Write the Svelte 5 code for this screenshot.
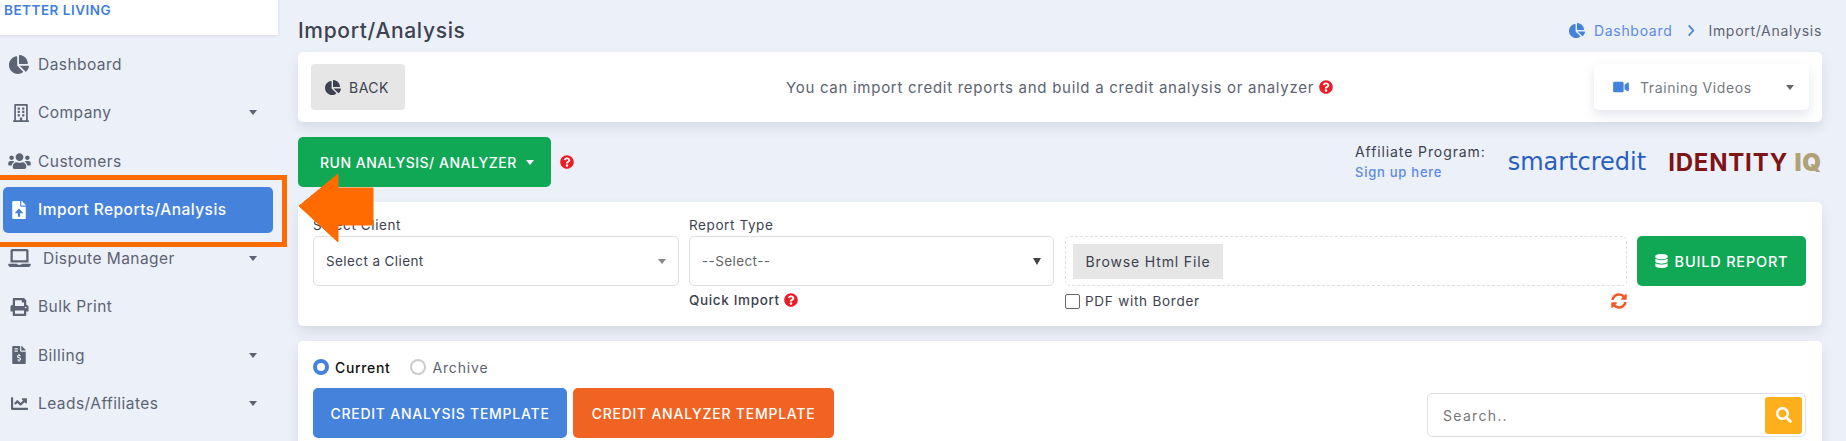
<script>
	const icons = {
		pie: ['0 0 544 512', 'M527.79 288H290.5l158.03 158.03c6.04 6.04 15.98 6.53 22.19 .68 38.7-36.46 65.32-85.61 73.13-140.86 1.34-9.46-6.51-17.85-16.06-17.85zm-15.83-64.8C503.72 103.74 408.26 8.28 288.8 .04 279.68-.59 272 7.1 272 16.24V240h223.77c9.14 0 16.82-7.68 16.19-16.8zM224 288V50.71c0-9.55-8.39-17.4-17.84-16.06C86.99 51.49-4.1 155.6 .14 280.37 4.5 408.51 114.83 513.59 243.03 511.98c50.4-.63 96.97-16.87 135.26-44.03 7.9-5.6 8.42-17.23 1.57-24.08L224 288z'],
		building: ['0 0 448 512', 'M128 148v-40c0-6.6 5.4-12 12-12h40c6.6 0 12 5.4 12 12v40c0 6.6-5.4 12-12 12h-40c-6.6 0-12-5.4-12-12zm140 12h40c6.6 0 12-5.4 12-12v-40c0-6.6-5.4-12-12-12h-40c-6.6 0-12 5.4-12 12v40c0 6.6 5.4 12 12 12zm-128 96h40c6.6 0 12-5.4 12-12v-40c0-6.6-5.4-12-12-12h-40c-6.6 0-12 5.4-12 12v40c0 6.6 5.4 12 12 12zm128 0h40c6.6 0 12-5.4 12-12v-40c0-6.6-5.4-12-12-12h-40c-6.6 0-12 5.4-12 12v40c0 6.6 5.4 12 12 12zm-76 84v-40c0-6.6-5.4-12-12-12h-40c-6.6 0-12 5.4-12 12v40c0 6.6 5.4 12 12 12h40c6.6 0 12-5.4 12-12zm76 12h40c6.6 0 12-5.4 12-12v-40c0-6.6-5.4-12-12-12h-40c-6.6 0-12 5.4-12 12v40c0 6.6 5.4 12 12 12zm180 124v36H0v-36c0-6.6 5.4-12 12-12h19.5V24c0-13.3 10.7-24 24-24h337c13.3 0 24 10.7 24 24v440H436c6.6 0 12 5.4 12 12zM79.5 463H192v-67c0-6.6 5.4-12 12-12h40c6.6 0 12 5.4 12 12v67h112.5V49L80 48l-.5 415z'],
		users: ['0 0 640 512', 'M96 224c35.3 0 64-28.7 64-64s-28.7-64-64-64-64 28.7-64 64 28.7 64 64 64zm448 0c35.3 0 64-28.7 64-64s-28.7-64-64-64-64 28.7-64 64 28.7 64 64 64zm32 32h-64c-17.6 0-33.5 7.1-45.1 18.6 40.3 22.1 68.9 62 75.1 109.4h66c17.7 0 32-14.3 32-32v-32c0-35.3-28.7-64-64-64zm-256 0c61.9 0 112-50.1 112-112S381.9 32 320 32 208 82.1 208 144s50.1 112 112 112zm76.8 32h-8.3c-20.8 10-43.9 16-68.5 16s-47.6-6-68.5-16h-8.3C179.6 288 128 339.6 128 403.2V432c0 26.5 21.5 48 48 48h288c26.5 0 48-21.5 48-48v-28.8c0-63.6-51.6-115.2-115.2-115.2zm-223.7-13.4C161.5 263.1 145.6 256 128 256H64c-35.3 0-64 28.7-64 64v32c0 17.7 14.3 32 32 32h65.9c6.3-47.4 34.9-87.3 75.2-109.4z'],
		upload: ['0 0 384 512', 'M224 136V0H24C10.7 0 0 10.7 0 24v464c0 13.3 10.7 24 24 24h336c13.3 0 24-10.7 24-24V160H248c-13.2 0-24-10.8-24-24zm65.18 215.97H224v80c0 8.84-7.16 16-16 16h-32c-8.84 0-16-7.16-16-16v-80H94.82c-14.28 0-21.41-17.29-11.27-27.36l96.42-95.7c6.65-6.61 17.39-6.61 24.04 0l96.42 95.7c10.15 10.07 3.03 27.36-11.25 27.36zM377 105L279.1 7c-4.5-4.5-10.6-7-17-7H256v128h128v-6.1c0-6.3-2.5-12.4-7-16.9z'],
		laptop: ['0 0 640 512', 'M624 416H381.54c-.74 19.81-14.71 32-32.74 32H288c-18.69 0-33.02-17.47-32.77-32H16c-8.8 0-16 7.2-16 16v16c0 35.2 28.8 64 64 64h512c35.2 0 64-28.8 64-64v-16c0-8.8-7.2-16-16-16zM576 48c0-26.4-21.6-48-48-48H112C85.6 0 64 21.6 64 48v336h512V48zm-64 272H128V64h384v256z'],
		print: ['0 0 512 512', 'M448 192V77.25c0-8.49-3.37-16.62-9.37-22.63L393.37 9.37c-6-6-14.14-9.37-22.63-9.37H96C78.33 0 64 14.33 64 32v160c-35.35 0-64 28.65-64 64v112c0 8.84 7.16 16 16 16h48v96c0 17.67 14.33 32 32 32h320c17.67 0 32-14.33 32-32v-96h48c8.84 0 16-7.16 16-16V256c0-35.35-28.65-64-64-64zm-64 256H128v-96h256v96zm0-224H128V64h192v48c0 8.84 7.16 16 16 16h48v96zm48 72c-13.25 0-24-10.75-24-24 0-13.26 10.75-24 24-24s24 10.74 24 24c0 13.25-10.75 24-24 24z'],
		invoice: ['0 0 384 512', 'M377 105L279.1 7c-4.5-4.5-10.6-7-17-7H256v128h128v-6.1c0-6.3-2.5-12.4-7-16.9zm-153 31V0H24C10.7 0 0 10.7 0 24v464c0 13.3 10.7 24 24 24h336c13.3 0 24-10.7 24-24V160H248c-13.2 0-24-10.8-24-24zM64 72c0-4.42 3.58-8 8-8h80c4.42 0 8 3.58 8 8v16c0 4.42-3.58 8-8 8H72c-4.42 0-8-3.58-8-8V72zm0 80v-16c0-4.42 3.58-8 8-8h80c4.42 0 8 3.58 8 8v16c0 4.42-3.58 8-8 8H72c-4.42 0-8-3.58-8-8zm144 263.88V440c0 4.42-3.58 8-8 8h-16c-4.42 0-8-3.58-8-8v-24.29c-11.29-.58-22.27-4.52-31.37-11.35-3.9-2.93-4.1-8.77-.57-12.14l11.75-11.21c2.77-2.64 6.89-2.76 10.13-.73 3.87 2.42 8.26 3.72 12.82 3.72h28.11c6.5 0 11.8-5.92 11.8-13.19 0-5.95-3.61-11.19-8.77-12.73l-45-13.5c-18.59-5.58-31.58-23.42-31.58-43.39 0-24.52 19.05-44.44 42.67-45.07V232c0-4.42 3.58-8 8-8h16c4.42 0 8 3.58 8 8v24.29c11.29.58 22.27 4.51 31.37 11.35 3.9 2.93 4.1 8.77.57 12.14l-11.75 11.21c-2.77 2.64-6.89 2.76-10.13.73-3.87-2.43-8.26-3.72-12.82-3.72h-28.11c-6.5 0-11.8 5.92-11.8 13.19 0 5.95 3.61 11.19 8.77 12.73l45 13.5c18.59 5.58 31.58 23.42 31.58 43.39 0 24.53-19.05 44.44-42.67 45.07z'],
		chart: ['0 0 512 512', 'M496 384H64V80c0-8.84-7.16-16-16-16H16C7.16 64 0 71.16 0 80v336c0 17.67 14.33 32 32 32h464c8.84 0 16-7.16 16-16v-32c0-8.84-7.16-16-16-16zM464 96H345.94c-21.38 0-32.09 25.85-16.97 40.97l32.4 32.4L288 242.75l-73.37-73.37c-12.5-12.5-32.76-12.5-45.25 0l-68.69 68.69c-6.25 6.25-6.25 16.38 0 22.63l22.62 22.62c6.25 6.25 16.38 6.25 22.63 0L192 237.25l73.37 73.37c12.5 12.5 32.76 12.5 45.25 0l96-96 32.4 32.4c15.12 15.12 40.97 4.41 40.97-16.97V112c0-8.84-7.16-16-16-16z'],
		help: ['0 0 512 512', 'M504 256c0 136.997-111.043 248-248 248S8 392.997 8 256C8 119.083 119.043 8 256 8s248 111.083 248 248zM262.655 90c-54.497 0-89.255 22.957-116.549 63.758-3.536 5.286-2.353 12.415 2.715 16.258l34.699 26.31c5.205 3.947 12.621 3.008 16.665-2.122 17.864-22.658 30.113-35.797 57.303-35.797 20.429 0 45.698 13.148 45.698 32.958 0 14.976-12.363 22.667-32.534 33.976C247.128 238.528 216 254.941 216 296v4c0 6.627 5.373 12 12 12h56c6.627 0 12-5.373 12-12v-1.333c0-28.462 83.186-29.647 83.186-106.667 0-58.002-60.165-102-116.531-102zM256 338c-25.365 0-46 20.635-46 46 0 25.364 20.635 46 46 46s46-20.636 46-46c0-25.365-20.635-46-46-46z'],
		video: ['0 0 576 512', 'M336.2 64H47.8C21.4 64 0 85.4 0 111.8v288.4C0 426.6 21.4 448 47.8 448h288.4c26.4 0 47.8-21.4 47.8-47.8V111.8c0-26.4-21.4-47.8-47.8-47.8zm189.4 37.7L416 177.3v157.4l109.6 75.5c21.2 14.6 50.4-.3 50.4-25.8V127.5c0-25.4-29.1-40.4-50.4-25.8z'],
		database: ['0 0 448 512', 'M448 73.143v45.714C448 159.143 347.667 192 224 192S0 159.143 0 118.857V73.143C0 32.857 100.333 0 224 0s224 32.857 224 73.143zM448 176v102.857C448 319.143 347.667 352 224 352S0 319.143 0 278.857V176c48.125 33.143 136.208 48.572 224 48.572S399.874 209.143 448 176zm0 160v102.857C448 479.143 347.667 512 224 512S0 479.143 0 438.857V336c48.125 33.143 136.208 48.572 224 48.572S399.874 369.143 448 336z'],
		search: ['0 0 512 512', 'M505 442.7L405.3 343c-4.5-4.5-10.6-7-17-7H372c27.6-35.3 44-79.7 44-128C416 93.1 322.9 0 208 0S0 93.1 0 208s93.1 208 208 208c48.3 0 92.7-16.4 128-44v16.3c0 6.4 2.5 12.5 7 17l99.7 99.7c9.4 9.4 24.6 9.4 33.9 0l28.3-28.3c9.4-9.4 9.4-24.6.1-34zM208 336c-70.7 0-128-57.2-128-128 0-70.7 57.2-128 128-128 70.7 0 128 57.2 128 128 0 70.7-57.2 128-128 128z'],
		sync: ['0 0 512 512', 'M370.72 133.28C339.458 104.008 298.888 87.962 255.848 88c-77.458.068-144.328 53.178-162.791 126.85-1.344 5.363-6.122 9.15-11.651 9.15H24.103c-7.498 0-13.194-6.807-11.807-14.176C33.933 94.924 134.813 8 256 8c66.448 0 126.791 26.136 171.315 68.685L463.03 40.97C478.149 25.851 504 36.559 504 57.941V192c0 13.255-10.745 24-24 24H345.941c-21.382 0-32.09-25.851-16.971-40.971l41.75-41.749zM32 296h134.059c21.382 0 32.09 25.851 16.971 40.971l-41.75 41.75c31.262 29.273 71.835 45.319 114.876 45.28 77.418-.07 144.315-53.144 162.787-126.849 1.344-5.363 6.122-9.15 11.651-9.15h57.304c7.498 0 13.194 6.807 11.807 14.176C478.067 417.076 377.187 504 256 504c-66.448 0-126.791-26.136-171.315-68.685L48.97 471.03C33.851 486.149 8 475.441 8 454.059V320c0-13.255 10.745-24 24-24z']
	};

	const menu = [
		{ label: 'Dashboard', icon: 'pie' },
		{ label: 'Company', icon: 'building', caret: true },
		{ label: 'Customers', icon: 'users' },
		{ label: 'Import Reports/Analysis', icon: 'upload', active: true },
		{ label: 'Dispute Manager', icon: 'laptop', caret: true, wide: true },
		{ label: 'Bulk Print', icon: 'print' },
		{ label: 'Billing', icon: 'invoice', caret: true },
		{ label: 'Leads/Affiliates', icon: 'chart', caret: true }
	];
</script>

{#snippet icon(name, cls)}
	<svg class="ico {cls}" viewBox={icons[name][0]} aria-hidden="true"><path fill="currentColor" d={icons[name][1]} /></svg>
{/snippet}

<div class="page">
	<aside class="sidebar">
		<div class="brand">BETTER LIVING</div>
		<nav>
			{#each menu as item}
				<a href="#top" class="nav-item" class:active={item.active} class:wide={item.wide}>
					<span class="nav-icon">{@render icon(item.icon, 'i-' + item.icon)}</span>
					<span class="nav-label">{item.label}</span>
					{#if item.caret}<span class="caret"></span>{/if}
				</a>
			{/each}
		</nav>
	</aside>

	<main class="content">
		<header class="page-head">
			<h1>Import/Analysis</h1>
			<div class="crumbs">
				{@render icon('pie', 'i-crumb')}
				<a href="#top">Dashboard</a>
				<svg class="chevron" viewBox="0 0 8 14" aria-hidden="true"><path d="M1.5 1.5 6.5 7l-5 5.500" fill="none" stroke="currentColor" stroke-width="1.800" /></svg>
				<span>Import/Analysis</span>
			</div>
		</header>

		<section class="card top-card">
			<button class="back">{@render icon('pie', 'i-back')}BACK</button>
			<p class="intro">You can import credit reports and build a credit analysis or analyzer {@render icon('help', 'i-help')}</p>
			<div class="training">
				{@render icon('video', 'i-video')}
				<span>Training Videos</span>
				<span class="caret grey"></span>
			</div>
		</section>

		<div class="action-row">
			<button class="run">RUN ANALYSIS/ ANALYZER<span class="caret white"></span></button>
			{@render icon('help', 'i-help run-help')}
			<div class="affiliate">
				<div class="aff-text">
					<div>Affiliate Program:</div>
					<a href="#top">Sign up here</a>
				</div>
				<span class="smartcredit">smartcredit</span>
				<span class="identity">IDENTITY <b>IQ</b></span>
			</div>
		</div>

		<section class="card form-card">
			<div class="field client">
				<label for="client">Select Client</label>
				<div id="client" class="select">Select a Client<span class="caret small"></span></div>
			</div>
			<div class="field report">
				<label for="report">Report Type</label>
				<div id="report" class="select light">--Select--<span class="caret dark"></span></div>
				<div class="quick">Quick Import {@render icon('help', 'i-help')}</div>
			</div>
			<div class="field file">
				<div class="dropzone"><span class="browse">Browse Html File</span></div>
				<div class="file-foot">
					<label class="check"><input type="checkbox" />PDF with Border</label>
					{@render icon('sync', 'i-sync')}
				</div>
			</div>
			<button class="build">{@render icon('database', 'i-db')}BUILD REPORT</button>
		</section>

		<section class="card list-card">
			<div class="radios">
				<span class="radio on"></span><span class="radio-label on">Current</span>
				<span class="radio"></span><span class="radio-label">Archive</span>
			</div>
			<div class="template-row">
				<button class="tpl blue">CREDIT ANALYSIS TEMPLATE</button>
				<button class="tpl orange">CREDIT ANALYZER TEMPLATE</button>
				<div class="search">
					<input type="text" placeholder="Search.." />
					<span class="search-btn">{@render icon('search', 'i-search')}</span>
				</div>
			</div>
		</section>
	</main>

	<!-- annotation drawn over the screenshot -->
	<div class="mark-box"></div>
	<svg class="mark-arrow" viewBox="0 0 76 70" aria-hidden="true">
		<path d="M1 33 40 1V15H75V52H40V69Z" fill="#ff6b00" stroke="#ff6b00" stroke-linejoin="round" />
	</svg>
</div>

<style>
	:global(body) {
		margin: 0;
		background: #ecf0f8;
	}
	.page {
		position: relative;
		display: flex;
		width: 1846px;
		height: 441px;
		overflow: hidden;
		background: #ecf0f8;
		font-family: Inter, 'Open Sans', sans-serif;
		font-size: 14px;
		letter-spacing: 0.5px;
		color: #5c6373;
	}
	.sidebar {
		flex: 0 0 278px;
	}
	.brand {
		height: 35px;
		padding: 1px 0 0 4px;
		box-sizing: border-box;
		background: #fff;
		box-shadow: 0 1px 3px rgba(60, 70, 100, 0.12);
		color: #3f80dc;
		font-size: 13.500px;
		font-weight: 600;
		line-height: 18px;
	}
	nav {
		padding-top: 6px;
	}
	.nav-item {
		display: flex;
		align-items: center;
		height: 46px;
		margin: 0 5px 2.500px 3px;
		border-radius: 5px;
		color: #5c6373;
		font-size: 15.500px;
		letter-spacing: 0.45px;
		text-decoration: none;
	}
	.nav-item.active {
		background: #4582dc;
		color: #fff;
		font-weight: 500;
	}
	.nav-icon {
		display: flex;
		justify-content: center;
		flex: 0 0 35px;
	}
	.nav-item.wide .nav-label {
		margin-left: 5px;
	}
	.ico {
		display: block;
	}
	.i-pie {
		width: 20px;
		height: 19px;
		margin-left: -3px;
	}
	.i-building {
		width: 16px;
		height: 18px;
	}
	.i-users {
		width: 23px;
		height: 18px;
		margin-left: -3px;
	}
	.i-upload {
		width: 14px;
		height: 18px;
		margin-left: -4px;
	}
	.i-laptop {
		width: 23px;
		height: 18px;
		margin-left: -3px;
	}
	.i-print {
		width: 19px;
		height: 18px;
		margin-left: -3px;
	}
	.i-invoice {
		width: 14px;
		height: 18px;
		margin-left: -3px;
	}
	.i-chart {
		width: 19px;
		height: 17px;
		margin-left: -3px;
	}
	.caret {
		width: 0;
		height: 0;
		margin-left: auto;
		margin-right: 16px;
		border-left: 4.500px solid transparent;
		border-right: 4.500px solid transparent;
		border-top: 5px solid #5c6373;
	}
	.content {
		flex: 1;
		min-width: 0;
		padding: 0 24px 0 20px;
	}
	.page-head {
		display: flex;
		align-items: center;
		justify-content: space-between;
		height: 52px;
		padding-top: 8px;
		box-sizing: border-box;
	}
	h1 {
		margin: 0;
		color: #3c4250;
		font-size: 21px;
		font-weight: 500;
		letter-spacing: 0.65px;
	}
	.crumbs {
		display: flex;
		align-items: center;
		font-size: 14px;
		letter-spacing: 0.7px;
		color: #5c6373;
	}
	.crumbs a {
		margin: 0 15px 0 9px;
		color: #5b8ae6;
		text-decoration: none;
	}
	.i-crumb {
		width: 16px;
		height: 15px;
		color: #4582dc;
	}
	.chevron {
		width: 8px;
		height: 13px;
		margin-right: 13px;
		color: #4582dc;
	}
	.card {
		background: #fff;
		border-radius: 5px;
		box-shadow: 0 6px 12px rgba(60, 70, 110, 0.12);
	}
	.top-card {
		position: relative;
		display: flex;
		align-items: center;
		justify-content: space-between;
		height: 70px;
		padding: 0 13px;
		box-sizing: border-box;
	}
	button {
		border: 0;
		font: inherit;
		letter-spacing: inherit;
		cursor: pointer;
	}
	.back {
		display: flex;
		align-items: center;
		gap: 8px;
		width: 94px;
		height: 46px;
		padding: 0 14px;
		border-radius: 4px;
		background: #e6e6e6;
		color: #3c4250;
	}
	.i-back {
		width: 16px;
		height: 15px;
	}
	.intro {
		display: flex;
		align-items: center;
		gap: 5px;
		margin: 0 0 0 120px;
		color: #5c6373;
		font-size: 15px;
		letter-spacing: 0.72px;
	}
	.i-help {
		width: 14px;
		height: 14px;
		color: #ed1c24;
	}
	.training {
		display: flex;
		align-items: center;
		width: 215px;
		height: 46px;
		box-sizing: border-box;
		padding-left: 18px;
		border-radius: 5px;
		box-shadow: 0 5px 12px rgba(60, 70, 110, 0.14);
		color: #74797f;
		letter-spacing: 0.6px;
	}
	.i-video {
		width: 18px;
		height: 14px;
		margin-right: 10px;
		color: #4582dc;
	}
	.caret.grey {
		margin-right: 15px;
		border-top-color: #666;
	}
	.action-row {
		display: flex;
		align-items: center;
		height: 50px;
		margin: 15px 0;
	}
	.run {
		display: flex;
		align-items: center;
		width: 253px;
		height: 50px;
		padding: 0 0 0 22px;
		box-sizing: border-box;
		border-radius: 5px;
		background: #10a855;
		color: #fff;
		font-size: 14px;
		font-weight: 500;
		letter-spacing: 0.5px;
	}
	.caret.white {
		margin: 0 17px 0 auto;
		border-top-color: #fff;
	}
	.run-help {
		margin-left: 9px;
	}
	.affiliate {
		display: flex;
		align-items: center;
		margin-left: auto;
	}
	.aff-text {
		margin-right: 22px;
		color: #3c4250;
		font-size: 14px;
		letter-spacing: 0.9px;
		line-height: 20px;
	}
	.aff-text a {
		color: #5b8ae6;
		font-size: 13px;
		font-weight: 500;
		letter-spacing: 0.75px;
		text-decoration: none;
	}
	.smartcredit {
		margin-right: 22px;
		color: #2a5fc0;
		font-family: 'DejaVu Sans', sans-serif;
		font-size: 24px;
		letter-spacing: 0;
	}
	.identity {
		color: #7f1416;
		font-size: 24px;
		font-weight: 700;
		letter-spacing: 0.8px;
	}
	.identity b {
		color: #b0a276;
	}
	.form-card {
		display: flex;
		gap: 10px;
		height: 124px;
		box-sizing: border-box;
		padding: 34px 16px 0 15px;
	}
	.field {
		position: relative;
		height: 50px;
	}
	.field label {
		position: absolute;
		top: -20px;
		left: 0;
		color: #3c4250;
		font-size: 13.500px;
		letter-spacing: 0.6px;
		line-height: 18px;
	}
	.client {
		flex: 0 0 366px;
	}
	.report {
		flex: 0 0 365px;
		margin-right: 1px;
	}
	.file {
		flex: 0 0 562px;
	}
	.select {
		display: flex;
		align-items: center;
		height: 50px;
		box-sizing: border-box;
		padding: 0 12px;
		border: 1px solid #dedfe3;
		border-radius: 5px;
		color: #3c4250;
		font-size: 13.500px;
		letter-spacing: 0.4px;
	}
	.select.light {
		color: #666;
	}
	.caret.small {
		margin-right: 0;
		border-left-width: 4px;
		border-right-width: 4px;
		border-top-color: #888;
	}
	.caret.dark {
		margin-right: 0;
		border-top: 7px solid #444;
	}
	.quick {
		display: flex;
		align-items: center;
		gap: 4px;
		margin-top: 5px;
		color: #3c4250;
		font-size: 13.500px;
		font-weight: 500;
		letter-spacing: 0.65px;
		line-height: 18px;
	}
	.dropzone {
		height: 50px;
		box-sizing: border-box;
		padding: 7px 7px;
		border: 1px dashed #dedfe3;
		border-radius: 5px;
	}
	.browse {
		display: flex;
		align-items: center;
		justify-content: center;
		width: 150px;
		height: 35px;
		background: #e6e6e6;
		color: #3c4250;
		font-size: 14px;
		letter-spacing: 0.85px;
	}
	.file-foot {
		display: flex;
		align-items: center;
		justify-content: space-between;
		margin-top: 6px;
	}
	.field .check {
		position: static;
		display: flex;
		align-items: center;
		gap: 5px;
		font-size: 13.500px;
		letter-spacing: 0.75px;
	}
	.check input {
		width: 15px;
		height: 15px;
		margin: 0;
		appearance: none;
		border: 1px solid #666;
		border-radius: 2px;
		background: #fff;
	}
	.i-sync {
		width: 16px;
		height: 16px;
		color: #f15a24;
	}
	.build {
		display: flex;
		align-items: center;
		justify-content: center;
		gap: 7px;
		width: 170px;
		height: 50px;
		border-radius: 5px;
		background: #10a855;
		color: #fff;
		font-size: 14.500px;
		font-weight: 500;
		letter-spacing: 0.8px;
	}
	.i-db {
		width: 13px;
		height: 14px;
	}
	.list-card {
		height: 120px;
		margin-top: 15px;
		box-sizing: border-box;
		padding: 18px 16px 0 15px;
	}
	.radios {
		display: flex;
		align-items: center;
		height: 16px;
	}
	.radio {
		box-sizing: border-box;
		width: 16px;
		height: 16px;
		border: 2px solid #ccc;
		border-radius: 50%;
	}
	.radio.on {
		border: 4px solid #4582dc;
	}
	.radio-label {
		margin: 0 20px 0 6px;
		color: #5c6373;
		font-size: 14px;
		letter-spacing: 0.85px;
	}
	.radio-label.on {
		color: #111;
		font-weight: 500;
		letter-spacing: 0.65px;
	}
	.template-row {
		display: flex;
		gap: 6px;
		margin-top: 13px;
	}
	.tpl {
		height: 50px;
		border-radius: 5px;
		color: #fff;
		font-size: 14px;
		font-weight: 500;
		letter-spacing: 0.75px;
	}
	.tpl.blue {
		width: 254px;
		background: #4582dc;
	}
	.tpl.orange {
		width: 261px;
		background: #f16322;
	}
	.search {
		display: flex;
		align-items: center;
		width: 379px;
		height: 44px;
		margin: 5px 0 0 auto;
		box-sizing: border-box;
		padding: 0 3px 0 15px;
		border: 1px solid #dedfe3;
		border-radius: 5px;
	}
	.search input {
		flex: 1;
		min-width: 0;
		border: 0;
		outline: 0;
		padding: 0;
		font: inherit;
		font-size: 14px;
		letter-spacing: 1.3px;
	}
	.search input::placeholder {
		color: #777;
	}
	.search-btn {
		display: flex;
		align-items: center;
		justify-content: center;
		width: 37px;
		height: 37px;
		border-radius: 3px;
		background: #fdb01b;
		color: #fff;
	}
	.i-search {
		width: 16px;
		height: 16px;
	}
	.mark-box {
		position: absolute;
		top: 175px;
		left: -5px;
		width: 282px;
		height: 62px;
		border: 5px solid #ff6b00;
	}
	.mark-arrow {
		position: absolute;
		top: 173px;
		left: 298px;
		width: 76px;
		height: 70px;
	}
</style>
